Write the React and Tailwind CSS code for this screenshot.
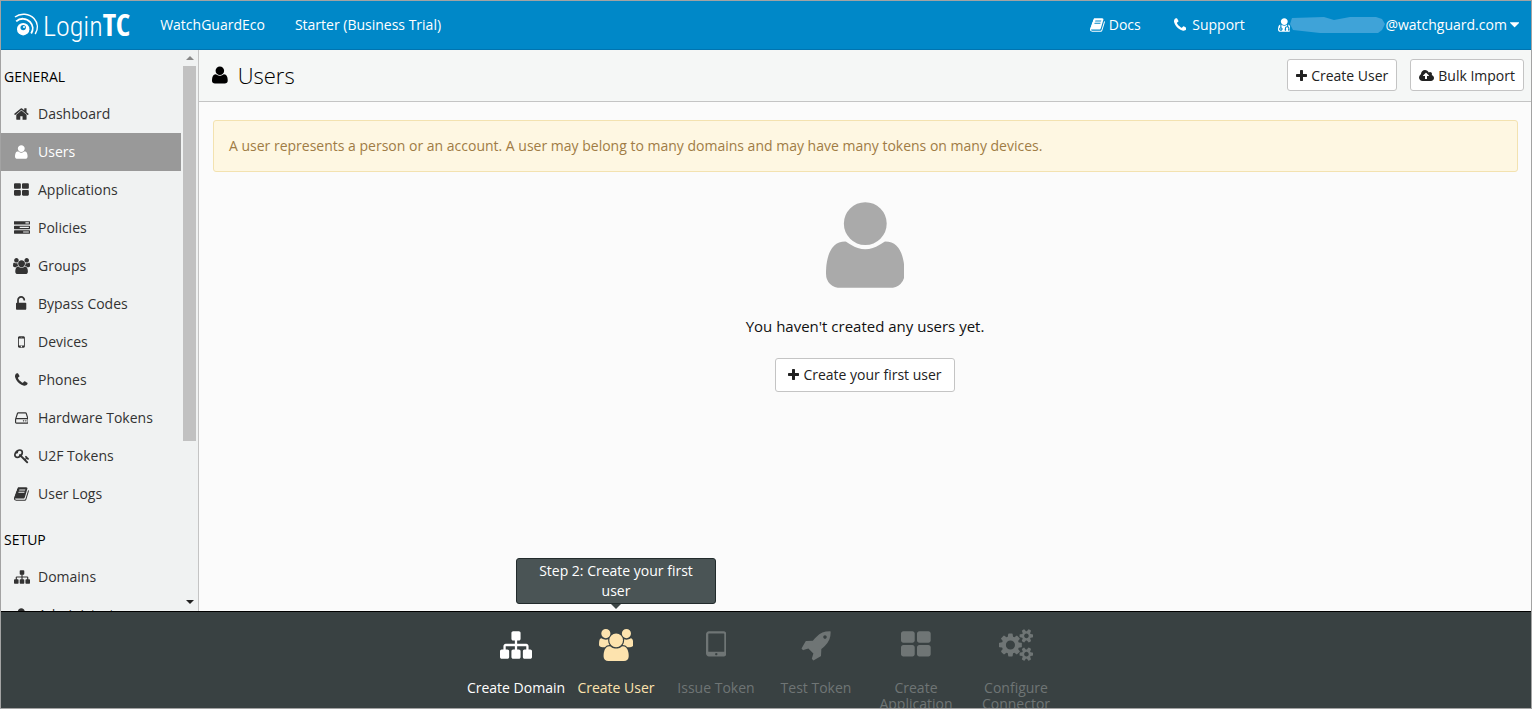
const ICONS = {
  user: [1408, "M1408 131q0 -120 -73 -189.5t-194 -69.5h-874q-121 0 -194 69.5t-73 189.5q0 53 3.5 103.5t14 109t26.5 108.5t43 97.5t62 81t85.5 53.5t111.5 20q9 0 42 -21.5t74.5 -48t108 -48t133.5 -21.5t133.5 21.5t108 48t74.5 48t42 21.5q61 0 111.5 -20t85.5 -53.5t62 -81t43 -97.5t26.5 -108.5t14 -109t3.5 -103.5zM1088 1024q0 -159 -112.5 -271.5t-271.5 -112.5t-271.5 112.5t-112.5 271.5t112.5 271.5t271.5 112.5t271.5 -112.5t112.5 -271.5z"],
  home: [1664, "M1408 544v-480q0 -26 -19 -45t-45 -19h-384v384h-256v-384h-384q-26 0 -45 19t-19 45v480q0 1 0.5 3t0.5 3l575 474l575 -474q1 -2 1 -6zM1631 613l-62 -74q-8 -9 -21 -11h-3q-13 0 -21 7l-692 577l-692 -577q-12 -8 -24 -7q-13 2 -21 11l-62 74q-8 10 -7 23.5t11 21.5l719 599q32 26 76 26t76 -26l244 -204v195q0 14 9 23t23 9h192q14 0 23 -9t9 -23v-408l219 -182q10 -8 11 -21.5t-7 -23.5z"],
  thLarge: [1664, "M768 512v-384q0 -52 -38 -90t-90 -38h-512q-52 0 -90 38t-38 90v384q0 52 38 90t90 38h512q52 0 90 -38t38 -90zM768 1280v-384q0 -52 -38 -90t-90 -38h-512q-52 0 -90 38t-38 90v384q0 52 38 90t90 38h512q52 0 90 -38t38 -90zM1664 512v-384q0 -52 -38 -90t-90 -38h-512q-52 0 -90 38t-38 90v384q0 52 38 90t90 38h512q52 0 90 -38t38 -90zM1664 1280v-384q0 -52 -38 -90t-90 -38h-512q-52 0 -90 38t-38 90v384q0 52 38 90t90 38h512q52 0 90 -38t38 -90z"],
  tasks: [1792, "M1024 128h640v128h-640v-128zM640 640h1024v128h-1024v-128zM1280 1152h384v128h-384v-128zM1792 320v-256q0 -26 -19 -45t-45 -19h-1664q-26 0 -45 19t-19 45v256q0 26 19 45t45 19h1664q26 0 45 -19t19 -45zM1792 832v-256q0 -26 -19 -45t-45 -19h-1664q-26 0 -45 19t-19 45v256q0 26 19 45t45 19h1664q26 0 45 -19t19 -45zM1792 1344v-256q0 -26 -19 -45t-45 -19h-1664q-26 0 -45 19t-19 45v256q0 26 19 45t45 19h1664q26 0 45 -19t19 -45z"],
  users: [1920, "M593 640q-162 -5 -265 -128h-134q-82 0 -138 40.5t-56 118.5q0 353 124 353q6 0 43.5 -21t97.5 -42.5t119 -21.5q67 0 133 23q-5 -37 -5 -66q0 -139 81 -256zM1664 3q0 -120 -73 -189.5t-194 -69.5h-874q-121 0 -194 69.5t-73 189.5q0 53 3.5 103.5t14 109t26.5 108.5t43 97.5t62 81t85.5 53.5t111.5 20q10 0 43 -21.5t73 -48t107 -48t135 -21.5t135 21.5t107 48t73 48t43 21.5q61 0 111.5 -20t85.5 -53.5t62 -81t43 -97.5t26.5 -108.5t14 -109t3.5 -103.5zM640 1280q0 -106 -75 -181t-181 -75t-181 75t-75 181t75 181t181 75t181 -75t75 -181zM1344 896q0 -159 -112.5 -271.5t-271.5 -112.5t-271.5 112.5t-112.5 271.5t112.5 271.5t271.5 112.5t271.5 -112.5t112.5 -271.5zM1920 671q0 -78 -56 -118.5t-138 -40.5h-134q-103 123 -265 128q81 117 81 256q0 29 -5 66q66 -23 133 -23q59 0 119 21.5t97.5 42.5t43.5 21q124 0 124 -353zM1792 1280q0 -106 -75 -181t-181 -75t-181 75t-75 181t75 181t181 75t181 -75t75 -181z"],
  unlock: [1152, "M1056 768q40 0 68 -28t28 -68v-576q0 -40 -28 -68t-68 -28h-960q-40 0 -68 28t-28 68v576q0 40 28 68t68 28h32v320q0 185 131.5 316.5t316.5 131.5t316.5 -131.5t131.5 -316.5q0 -26 -19 -45t-45 -19h-64q-26 0 -45 19t-19 45q0 106 -75 181t-181 75t-181 -75t-75 -181v-320h736z"],
  mobile: [768, "M464 128q0 33 -23.5 56.5t-56.5 23.5t-56.5 -23.5t-23.5 -56.5t23.5 -56.5t56.5 -23.5t56.5 23.5t23.5 56.5zM672 288v704q0 13 -9.5 22.5t-22.5 9.5h-512q-13 0 -22.5 -9.5t-9.5 -22.5v-704q0 -13 9.5 -22.5t22.5 -9.5h512q13 0 22.5 9.5t9.5 22.5zM480 1136q0 16 -16 16h-160q-16 0 -16 -16t16 -16h160q16 0 16 16zM768 1152v-1024q0 -52 -38 -90t-90 -38h-512q-52 0 -90 38t-38 90v1024q0 52 38 90t90 38h512q52 0 90 -38t38 -90z"],
  phone: [1408, "M1408 296q0 -27 -10 -70.5t-21 -68.5q-21 -50 -122 -106q-94 -51 -186 -51q-27 0 -53 3.5t-57.5 12.5t-47 14.5t-55.5 20.5t-49 18q-98 35 -175 83q-127 79 -264 216t-216 264q-48 77 -83 175q-3 9 -18 49t-20.5 55.5t-14.5 47t-12.5 57.5t-3.5 53q0 92 51 186q56 101 106 122q25 11 68.5 21t70.5 10q14 0 21 -3q18 -6 53 -76q11 -19 30 -54t35 -63.5t31 -53.5q3 -4 17.5 -25t21.5 -35.5t7 -28.5q0 -20 -28.5 -50t-62 -55t-62 -53t-28.5 -46q0 -9 5 -22.5t8.5 -20.5t14 -24t11.5 -19q76 -137 174 -235t235 -174q2 -1 19 -11.5t24 -14t20.5 -8.5t22.5 -5q18 0 46 28.5t53 62t55 62t50 28.5q14 0 28.5 -7t35.5 -21.5t25 -17.5q25 -15 53.5 -31t63.5 -35t54 -30q70 -35 76 -53q3 -7 3 -21z"],
  hdd: [1536, "M1040 320q0 -33 -23.5 -56.5t-56.5 -23.5t-56.5 23.5t-23.5 56.5t23.5 56.5t56.5 23.5t56.5 -23.5t23.5 -56.5zM1296 320q0 -33 -23.5 -56.5t-56.5 -23.5t-56.5 23.5t-23.5 56.5t23.5 56.5t56.5 23.5t56.5 -23.5t23.5 -56.5zM1408 160v320q0 13 -9.5 22.5t-22.5 9.5h-1216q-13 0 -22.5 -9.5t-9.5 -22.5v-320q0 -13 9.5 -22.5t22.5 -9.5h1216q13 0 22.5 9.5t9.5 22.5zM178 640h1180l-157 482q-4 13 -16 21.5t-26 8.5h-782q-14 0 -26 -8.5t-16 -21.5zM1536 480v-320q0 -66 -47 -113t-113 -47h-1216q-66 0 -113 47t-47 113v320q0 25 16 75l197 606q17 53 63 86t101 33h782q55 0 101 -33t63 -86l197 -606q16 -50 16 -75z"],
  key: [1683, "M832 1024q0 80 -56 136t-136 56t-136 -56t-56 -136q0 -42 19 -83q-41 19 -83 19q-80 0 -136 -56t-56 -136t56 -136t136 -56t136 56t56 136q0 42 -19 83q41 -19 83 -19q80 0 136 56t56 136zM1683 320q0 -17 -49 -66t-66 -49q-9 0 -28.5 16t-36.5 33t-38.5 40t-24.5 26l-96 -96l220 -220q28 -28 28 -68q0 -42 -39 -81t-81 -39q-40 0 -68 28l-671 671q-176 -131 -365 -131q-163 0 -265.5 102.5t-102.5 265.5q0 160 95 313t248 248t313 95q163 0 265.5 -102.5t102.5 -265.5q0 -189 -131 -365l355 -355l96 96q-3 3 -26 24.5t-40 38.5t-33 36.5t-16 28.5q0 17 49 66t66 49q13 0 23 -10q6 -6 46 -44.5t82 -79.5t86.5 -86t73 -78t28.5 -41z"],
  book: [1664, "M1639 1058q40 -57 18 -129l-275 -906q-19 -64 -76.5 -107.5t-122.5 -43.5h-923q-77 0 -148.5 53.5t-99.5 131.5q-24 67 -2 127q0 4 3 27t4 37q1 8 -3 21.5t-3 19.5q2 11 8 21t16.5 23.5t16.5 23.5q23 38 45 91.5t30 91.5q3 10 0.5 30t-0.5 28q3 11 17 28t17 23q21 36 42 92t25 90q1 9 -2.5 32t0.5 28q4 13 22 30.5t22 22.5q19 26 42.5 84.5t27.5 96.5q1 8 -3 25.5t-2 26.5q2 8 9 18t18 23t17 21q8 12 16.5 30.5t15 35t16 36t19.5 32t26.5 23.5t36 11.5t47.5 -5.5l-1 -3q38 9 51 9h761q74 0 114 -56t18 -130l-274 -906q-36 -119 -71.5 -153.5t-128.5 -34.5h-869q-27 0 -38 -15q-11 -16 -1 -43q24 -70 144 -70h923q29 0 56 15.5t35 41.5l300 987q7 22 5 57q38 -15 59 -43zM575 1056q-4 -13 2 -22.5t20 -9.5h608q13 0 25.5 9.5t16.5 22.5l21 64q4 13 -2 22.5t-20 9.5h-608q-13 0 -25.5 -9.5t-16.5 -22.5zM492 800q-4 -13 2 -22.5t20 -9.5h608q13 0 25.5 9.5t16.5 22.5l21 64q4 13 -2 22.5t-20 9.5h-608q-13 0 -25.5 -9.5t-16.5 -22.5z"],
  sitemap: [1792, "M1792 288v-320q0 -40 -28 -68t-68 -28h-320q-40 0 -68 28t-28 68v320q0 40 28 68t68 28h96v192h-512v-192h96q40 0 68 -28t28 -68v-320q0 -40 -28 -68t-68 -28h-320q-40 0 -68 28t-28 68v320q0 40 28 68t68 28h96v192h-512v-192h96q40 0 68 -28t28 -68v-320q0 -40 -28 -68t-68 -28h-320q-40 0 -68 28t-28 68v320q0 40 28 68t68 28h96v192q0 52 38 90t90 38h512v192h-96q-40 0 -68 28t-28 68v320q0 40 28 68t68 28h320q40 0 68 -28t28 -68v-320q0 -40 -28 -68t-68 -28h-96v-192h512q52 0 90 -38t38 -90v-192h96q40 0 68 -28t28 -68z"],
  tablet: [1152, "M640 128q0 26 -19 45t-45 19t-45 -19t-19 -45t19 -45t45 -19t45 19t19 45zM1024 288v960q0 13 -9.5 22.5t-22.5 9.5h-832q-13 0 -22.5 -9.5t-9.5 -22.5v-960q0 -13 9.5 -22.5t22.5 -9.5h832q13 0 22.5 9.5t9.5 22.5zM1152 1248v-1088q0 -66 -47 -113t-113 -47h-832q-66 0 -113 47t-47 113v1088q0 66 47 113t113 47h832q66 0 113 -47t47 -113z"],
  rocket: [1664, "M1440 1088q0 40 -28 68t-68 28t-68 -28t-28 -68t28 -68t68 -28t68 28t28 68zM1664 1376q0 -249 -75.5 -430.5t-253.5 -360.5q-81 -80 -195 -176l-20 -379q-2 -16 -16 -26l-384 -224q-7 -4 -16 -4q-12 0 -23 9l-64 64q-13 14 -8 32l85 276l-281 281l-276 -85q-3 -1 -9 -1q-14 0 -23 9l-64 64q-17 19 -5 39l224 384q10 14 26 16l379 20q96 114 176 195q188 187 358 258t431 71q14 0 24 -9.5t10 -22.5z"],
  cogs: [1920, "M896 640q0 106 -75 181t-181 75t-181 -75t-75 -181t75 -181t181 -75t181 75t75 181zM1664 128q0 52 -38 90t-90 38t-90 -38t-38 -90q0 -53 37.5 -90.5t90.5 -37.5t90.5 37.5t37.5 90.5zM1664 1152q0 52 -38 90t-90 38t-90 -38t-38 -90q0 -53 37.5 -90.5t90.5 -37.5t90.5 37.5t37.5 90.5zM1280 731v-185q0 -10 -7 -19.5t-16 -10.5l-155 -24q-11 -35 -32 -76q34 -48 90 -115q7 -11 7 -20q0 -12 -7 -19q-23 -30 -82.5 -89.5t-78.5 -59.5q-11 0 -21 7l-115 90q-37 -19 -77 -31q-11 -108 -23 -155q-7 -24 -30 -24h-186q-11 0 -20 7.5t-10 17.5l-23 153q-34 10 -75 31l-118 -89q-7 -7 -20 -7q-11 0 -21 8q-144 133 -144 160q0 9 7 19q10 14 41 53t47 61q-23 44 -35 82l-152 24q-10 1 -17 9.5t-7 19.5v185q0 10 7 19.5t16 10.5l155 24q11 35 32 76q-34 48 -90 115q-7 11 -7 20q0 12 7 20q22 30 82 89t79 59q11 0 21 -7l115 -90q34 18 77 32q11 108 23 154q7 24 30 24h186q11 0 20 -7.5t10 -17.5l23 -153q34 -10 75 -31l118 89q8 7 20 7q11 0 21 -8q144 -133 144 -160q0 -8 -7 -19q-12 -16 -42 -54t-45 -60q23 -48 34 -82l152 -23q10 -2 17 -10.5t7 -19.5zM1920 198v-140q0 -16 -149 -31q-12 -27 -30 -52q51 -113 51 -138q0 -4 -4 -7q-122 -71 -124 -71q-8 0 -46 47t-52 68q-20 -2 -30 -2t-30 2q-14 -21 -52 -68t-46 -47q-2 0 -124 71q-4 3 -4 7q0 25 51 138q-18 25 -30 52q-149 15 -149 31v140q0 16 149 31q13 29 30 52q-51 113 -51 138q0 4 4 7q4 2 35 20t59 34t30 16q8 0 46 -46.5t52 -67.5q20 2 30 2t30 -2q51 71 92 112l6 2q4 0 124 -70q4 -3 4 -7q0 -25 -51 -138q17 -23 30 -52q149 -15 149 -31zM1920 1222v-140q0 -16 -149 -31q-12 -27 -30 -52q51 -113 51 -138q0 -4 -4 -7q-122 -71 -124 -71q-8 0 -46 47t-52 68q-20 -2 -30 -2t-30 2q-14 -21 -52 -68t-46 -47q-2 0 -124 71q-4 3 -4 7q0 25 51 138q-18 25 -30 52q-149 15 -149 31v140q0 16 149 31q13 29 30 52q-51 113 -51 138q0 4 4 7q4 2 35 20t59 34t30 16q8 0 46 -46.5t52 -67.5q20 2 30 2t30 -2q51 71 92 112l6 2q4 0 124 -70q4 -3 4 -7q0 -25 -51 -138q17 -23 30 -52q149 -15 149 -31z"],
  userMd: [1408, "M384 192q0 -26 -19 -45t-45 -19t-45 19t-19 45t19 45t45 19t45 -19t19 -45zM1408 131q0 -121 -73 -190t-194 -69h-874q-121 0 -194 69t-73 190q0 68 5.5 131t24 138t47.5 132.5t81 103t120 60.5q-22 -52 -22 -120v-203q-58 -20 -93 -70t-35 -111q0 -80 56 -136t136 -56t136 56t56 136q0 61 -35.5 111t-92.5 70v203q0 62 25 93q132 -104 295 -104t295 104q25 -31 25 -93v-64q-106 0 -181 -75t-75 -181v-89q-32 -29 -32 -71q0 -40 28 -68t68 -28t68 28t28 68q0 42 -32 71v89q0 52 38 90t90 38t90 -38t38 -90v-89q-32 -29 -32 -71q0 -40 28 -68t68 -28t68 28t28 68q0 42 -32 71v89q0 68 -34.5 127.5t-93.5 93.5q0 10 0.5 42.5t0 48t-2.5 41.5t-7 47t-13 40q68 -15 120 -60.5t81 -103t47.5 -132.5t24 -138t5.5 -131zM1088 1024q0 -159 -112.5 -271.5t-271.5 -112.5t-271.5 112.5t-112.5 271.5t112.5 271.5t271.5 112.5t271.5 -112.5t112.5 -271.5z"],
  plus: [1408, "M1408 800v-192q0 -40 -28 -68t-68 -28h-416v-416q0 -40 -28 -68t-68 -28h-192q-40 0 -68 28t-28 68v416h-416q-40 0 -68 28t-28 68v192q0 40 28 68t68 28h416v416q0 40 28 68t68 28h192q40 0 68 -28t28 -68v-416h416q40 0 68 -28t28 -68z"],
  cloudUpload: [1920, "M1280 672q0 14 -9 23l-352 352q-9 9 -23 9t-23 -9l-351 -351q-10 -12 -10 -24q0 -14 9 -23t23 -9h224v-352q0 -13 9.5 -22.5t22.5 -9.5h192q13 0 22.5 9.5t9.5 22.5v352h224q13 0 22.5 9.5t9.5 22.5zM1920 384q0 -159 -112.5 -271.5t-271.5 -112.5h-1088q-185 0 -316.5 131.5t-131.5 316.5q0 130 70 240t188 165q-2 30 -2 43q0 212 150 362t362 150q156 0 285.5 -87t188.5 -231q71 62 166 62q106 0 181 -75t75 -181q0 -76 -41 -138q130 -31 213.5 -135.5t83.5 -238.5z"],
  caret: [1024, "M1024 896q0 -26 -19 -45l-448 -448q-19 -19 -45 -19t-45 19l-448 448q-19 19 -19 45t19 45t45 19h896q26 0 45 -19t19 -45z"],
};

function Icon({ name, className = "h-4" }) {
  const [width, d] = ICONS[name];
  return (
    <svg viewBox={`0 0 ${width} 1792`} className={`w-auto shrink-0 fill-current ${className}`} aria-hidden="true">
      <path transform="translate(0 1536) scale(1 -1)" fillRule="evenodd" d={d} />
    </svg>
  );
}

function Logo() {
  return (
    <a href="#home" className="flex items-center pl-[13px]" aria-label="LoginTC">
      <svg viewBox="0 0 26 26" className="size-[26px] shrink-0" fill="none" stroke="currentColor" aria-hidden="true">
        <circle cx="9.2" cy="17.2" r="6.2" fill="currentColor" stroke="none" />
        <circle cx="9.2" cy="15.6" r="2.7" fill="#0088c8" stroke="none" />
        <circle cx="10" cy="15" r="1" fill="currentColor" stroke="none" />
        <path d="M2.2 9.4C6 5.8 12.4 6 16 9.8C19.2 13.2 19.4 18 17.2 21.6" strokeWidth="1.9" />
        <path d="M1 5C6.4 0.6 15.4 1.4 20 6.6C24.2 11.2 24.2 17.2 21.2 22" strokeWidth="1.5" />
      </svg>
      <span className="ml-[3px] flex items-baseline font-['Roboto_Condensed','Roboto',sans-serif] text-[28px] leading-[46px] font-light">
        Login
        <b className="font-['Open_Sans_Condensed','Roboto',sans-serif] text-[31px] leading-[46px] font-bold">TC</b>
      </span>
    </a>
  );
}

const GENERAL = [
  ["home", "Dashboard"],
  ["user", "Users"],
  ["thLarge", "Applications"],
  ["tasks", "Policies"],
  ["users", "Groups"],
  ["unlock", "Bypass Codes"],
  ["mobile", "Devices"],
  ["phone", "Phones"],
  ["hdd", "Hardware Tokens"],
  ["key", "U2F Tokens"],
  ["book", "User Logs"],
];
const SETUP = [
  ["sitemap", "Domains"],
  ["user", "Administrators"],
];

function NavGroup({ title, items, active }) {
  return (
    <section>
      <h2 className="px-[3px] pt-[17px] pb-2 leading-5 font-normal text-black">{title}</h2>
      <ul>
        {items.map(([icon, label]) => (
          <li key={label}>
            <a
              href={`#${label}`}
              className={`flex h-[38px] items-center pl-[11px] ${
                label === active ? "bg-[#999] text-white" : "text-[#333]"
              }`}
            >
              <span className="flex w-[19px] justify-center">
                <Icon name={icon} />
              </span>
              <span className="ml-[7px]">{label}</span>
            </a>
          </li>
        ))}
      </ul>
    </section>
  );
}

function Sidebar() {
  return (
    <aside className="flex w-[198px] shrink-0 overflow-hidden border-r border-[#c4c4c4] bg-[#f0f2f2]">
      <nav className="w-[180px] shrink-0" aria-label="Main">
        <NavGroup title="GENERAL" items={GENERAL} active="Users" />
        <NavGroup title="SETUP" items={SETUP} />
      </nav>
      <div className="ml-0.5 flex w-[13px] flex-col items-center" aria-hidden="true">
        <div className="flex h-4 shrink-0 items-center">
          <svg viewBox="0 0 8 4" className="h-1 w-2 fill-[#888]"><path d="M0 4L4 0L8 4Z" /></svg>
        </div>
        <div className="h-[375px] w-full shrink-0 bg-[#c1c1c1]" />
        <div className="flex grow items-end pb-[7px]">
          <svg viewBox="0 0 8 4" className="h-1 w-2 fill-[#222]"><path d="M0 0L4 4L8 0Z" /></svg>
        </div>
      </div>
    </aside>
  );
}

const STEPS = [
  ["sitemap", "Create Domain", "text-white"],
  ["users", "Create User", "text-[#fde3ae]", "Step 2: Create your first user"],
  ["tablet", "Issue Token", "text-[#6f7575]"],
  ["rocket", "Test Token", "text-[#6f7575]"],
  ["thLarge", "Create Application", "text-[#6f7575]"],
  ["cogs", "Configure Connector", "text-[#6f7575]"],
];

const BUTTON =
  "flex items-center gap-1 rounded-[3px] border border-[#c4c4c4] bg-white leading-5 text-[#222]";

export default function App() {
  return (
    <div className="flex h-screen flex-col border border-[#a3a3a3] bg-[#fbfbfb] font-['Open_Sans',sans-serif] text-sm text-black">
      <header className="flex h-[49px] shrink-0 items-center justify-between border-b border-[#0074b0] bg-[#0088c8] text-white">
        <div className="flex items-center">
          <Logo />
          <a href="#org" className="ml-[30px]">WatchGuardEco</a>
          <a href="#plan" className="ml-[30px]">Starter (Business Trial)</a>
        </div>
        <nav className="flex items-center pr-3" aria-label="Account">
          <a href="#docs" className="flex items-center gap-1"><Icon name="book" />Docs</a>
          <a href="#support" className="ml-[33px] flex items-center gap-1.5"><Icon name="phone" />Support</a>
          <button type="button" className="ml-[33px] flex items-center">
            <Icon name="userMd" />
            <svg viewBox="0 0 95 18" className="h-[18px] w-[95px] fill-[#3fa3d8]" aria-hidden="true">
              <path d="M2 2L34 1L44 4L60 1L86 1L92 3L95 8L92 14L88 17L30 17L12 15L3 14L0 8Z" />
            </svg>
            @watchguard.com
            <Icon name="caret" className="ml-[3px] h-4" />
          </button>
        </nav>
      </header>

      <div className="flex min-h-0 grow">
        <Sidebar />
        <main className="min-w-0 grow">
          <div className="flex h-[52px] items-center justify-between border-b border-[#c4c4c4] bg-[#f5f7f6] pr-[7px] pb-px pl-[13px]">
            <h1 className="flex items-center gap-2.5 text-[22px] leading-8 font-light">
              <Icon name="user" className="h-5" />
              Users
            </h1>
            <div className="flex gap-[13px]">
              <button type="button" className={`${BUTTON} px-2 pt-1.5 pb-1`}><Icon name="plus" className="h-3.5" />Create User</button>
              <button type="button" className={`${BUTTON} px-2 pt-1.5 pb-1`}><Icon name="cloudUpload" className="h-3.5" />Bulk Import</button>
            </div>
          </div>
          <p className="mt-[18px] mr-[13px] ml-3.5 rounded-[3px] border border-[#f3e2b0] bg-[#fef7e2] px-[15px] py-[15px] leading-5 text-[#a07c45]">
            A user represents a person or an account. A user may belong to many domains and may have many tokens on many devices.
          </p>
          <div className="flex flex-col items-center pt-[23px]">
            <Icon name="user" className="h-[100px] text-[#aaa]" />
            <p className="mt-[21px] text-[15px] leading-5 text-[#111]">You haven't created any users yet.</p>
            <button type="button" className={`${BUTTON} mt-[22px] px-3 py-1.5`}>
              <Icon name="plus" className="h-3.5" />Create your first user
            </button>
          </div>
        </main>
      </div>

      <footer className="h-[97px] shrink-0 border-t border-black bg-[#394142]">
        <ol className="flex h-full justify-center">
          {STEPS.map(([icon, label, color, tip]) => (
            <li key={label} className={`relative w-[100px] ${color}`}>
              <a href={`#${label}`} className="flex h-24 flex-col items-center overflow-hidden pt-[17px] text-center leading-4">
                <Icon name={icon} className="h-8" />
                <span className="mt-[19px]">{label}</span>
              </a>
              {tip && (
                <div role="tooltip" className="absolute bottom-full left-0 mb-2 flex w-[200px] -translate-x-[50px] flex-col items-center">
                  <div className="w-full rounded-[3px] border border-[#222b2c] bg-[#4a5455] px-4 py-0.5 text-center leading-5 text-white">
                    {tip}
                  </div>
                  <svg viewBox="0 0 10 5" className="absolute top-full h-[5px] w-2.5 fill-[#3c4546]" aria-hidden="true"><path d="M0 0L5 5L10 0Z" /></svg>
                </div>
              )}
            </li>
          ))}
        </ol>
      </footer>
    </div>
  );
}
